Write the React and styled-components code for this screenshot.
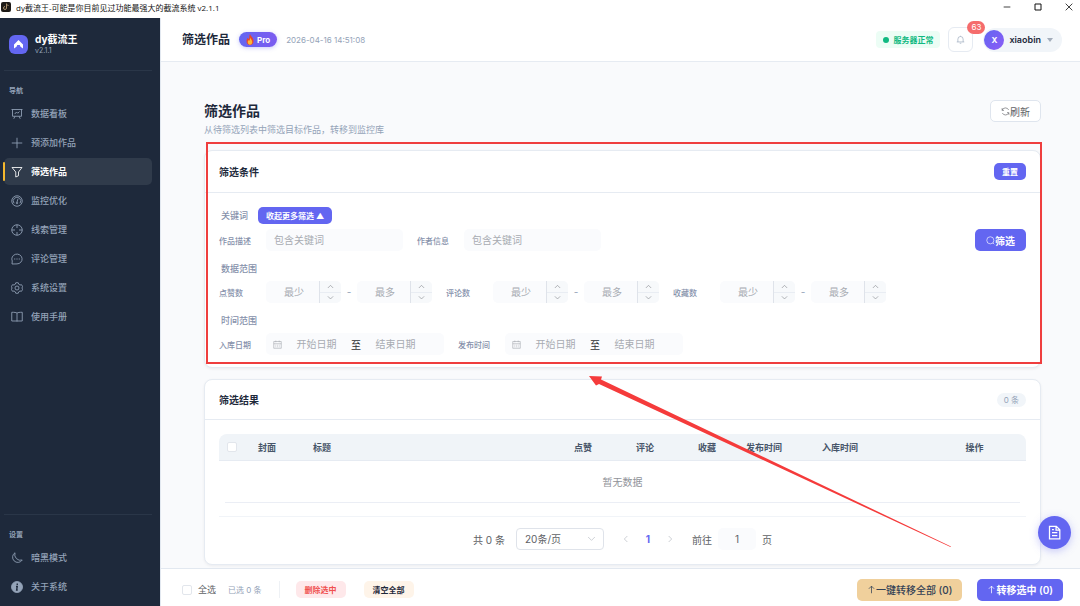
import { useState } from "react";
import styled, { createGlobalStyle, ThemeProvider } from "styled-components";

const theme = {
  colors: {
    primary: "#6366f1",
    dark: "#1e293b",
    text: "#606266",
    muted: "#94a3b8",
    label: "#8590aa",
    placeholder: "#a8abb2",
    border: "#e6ebf2",
    field: "#fafbfd",
    page: "#f9fafc",
    navText: "#94a3b8",
  },
};

const GlobalStyle = createGlobalStyle`
  * {
    box-sizing: border-box;
  }

  body {
    margin: 0;
    font-family: Inter, "Noto Sans CJK SC", sans-serif;
    font-size: 10px;
    color: #1e293b;
  }

  button, input, select {
    margin: 0;
    padding: 0;
    border: 0;
    background: none;
    font-family: inherit;
    color: inherit;
  }

  button {
    cursor: pointer;
  }

  h1, h2, p {
    margin: 0;
  }
`;

const Shell = styled.div`
  display: flex;
  flex-direction: column;
  height: 100vh;
  background-color: white;
`;

const TitleBar = styled.div`
  flex: none;
  display: flex;
  align-items: center;
  height: 18px;
  padding: 0 7px 4px 1px;
  font-family: "Open Sans", "Noto Sans CJK SC", sans-serif;
  font-size: 8px;
  color: #111;
`;

const AppTitle = styled.span`
  flex: 1;
  margin-left: 5px;
`;

const WindowButtons = styled.div`
  display: flex;
  gap: 23px;

  button {
    display: flex;
  }
`;

const Body = styled.div`
  flex: 1;
  display: flex;
  min-height: 0;
`;

const Sidebar = styled.aside`
  flex: none;
  display: flex;
  flex-direction: column;
  width: 160px;
  padding: 0 8px 6px 4px;
  background-color: ${({ theme }) => theme.colors.dark};
  color: ${({ theme }) => theme.colors.navText};
`;

const Brand = styled.div`
  display: flex;
  align-items: center;
  gap: 7px;
  height: 53px;
  padding-left: 5px;
  border-bottom: 1px solid #2a3648;
`;

const BrandLogo = styled.div`
  display: flex;
  align-items: center;
  justify-content: center;
  width: 19px;
  height: 19px;
  border-radius: 6px;
  background-color: ${({ theme }) => theme.colors.primary};
`;

const BrandName = styled.p`
  font-size: 10px;
  line-height: 14px;
  font-weight: 700;
  color: white;
`;

const BrandVersion = styled.p`
  font-size: 7px;
  line-height: 10px;
`;

const NavTitle = styled.p`
  padding: 15px 5px 4px;
  font-size: 7px;
  line-height: 10px;
  font-weight: 600;
`;

const Nav = styled.nav`
  display: flex;
  flex-direction: column;
  gap: 2px;
`;

const NavBottom = styled.div`
  margin-top: auto;
  border-top: 1px solid #2a3648;
`;

const NavLink = styled.a`
  display: flex;
  align-items: center;
  gap: 8px;
  height: 27px;
  padding-left: 7px;
  border-radius: 5px;
  font-size: 9px;
  font-weight: ${({ $active }) => ($active ? 700 : 500)};
  color: ${({ $active }) => ($active ? "white" : "inherit")};
  background-color: ${({ $active }) => ($active ? "#303b4b" : "transparent")};
  text-decoration: none;
  position: relative;

  &::before {
    content: "";
    display: ${({ $active }) => ($active ? "block" : "none")};
    position: absolute;
    left: -1px;
    top: 4px;
    bottom: 4px;
    width: 2px;
    border-radius: 1px;
    background-color: #f5b82e;
  }
`;

const Main = styled.main`
  flex: 1;
  display: flex;
  flex-direction: column;
  min-width: 0;
  border-left: 1px solid #e2e8f0;
`;

const Header = styled.header`
  flex: none;
  display: flex;
  align-items: center;
  height: 44px;
  padding: 0 18px 0 21px;
  border-bottom: 1px solid ${({ theme }) => theme.colors.border};
`;

const HeaderTitle = styled.h1`
  font-size: 12px;
  line-height: 18px;
  font-weight: 700;
`;

const ProTag = styled.span`
  display: flex;
  align-items: center;
  gap: 3px;
  height: 15px;
  margin: 0 9px;
  padding: 0 7px;
  border-radius: 8px;
  background: linear-gradient(90deg, #6366f1, #7c5cf0);
  box-shadow: 0 1px 4px rgba(99, 102, 241, 0.35);
  font-size: 8px;
  font-weight: 700;
  color: white;
`;

const Clock = styled.time`
  font-size: 8px;
  color: ${({ theme }) => theme.colors.muted};
`;

const HeaderRight = styled.div`
  display: flex;
  align-items: center;
  margin-left: auto;
`;

const ServerStatus = styled.span`
  display: flex;
  align-items: center;
  gap: 4px;
  height: 17px;
  padding: 0 7px;
  border-radius: 4px;
  background-color: #ecfdf5;
  font-size: 8px;
  font-weight: 600;
  color: #10b981;

  &::before {
    content: "";
    width: 6px;
    height: 6px;
    border-radius: 50%;
    background-color: #10b981;
  }
`;

const BellButton = styled.button`
  position: relative;
  display: flex;
  align-items: center;
  justify-content: center;
  width: 25px;
  height: 25px;
  margin: 0 10px 0 8px;
  border: 1px solid ${({ theme }) => theme.colors.border};
  border-radius: 6px;
  color: ${({ theme }) => theme.colors.muted};
`;

const BellCount = styled.span`
  position: absolute;
  top: -7px;
  right: -13px;
  height: 13px;
  padding: 0 4px;
  border-radius: 7px;
  background-color: #f56c6c;
  font-size: 8px;
  line-height: 13px;
  color: white;
`;

const UserButton = styled.button`
  display: flex;
  align-items: center;
  height: 24px;
  padding: 0 9px 0 1px;
  border-radius: 12px;
  background-color: #f1f5f9;
  font-size: 9px;
  font-weight: 600;
  color: ${({ theme }) => theme.colors.dark};

  svg {
    margin-left: 6px;
  }
`;

const Avatar = styled.span`
  width: 20px;
  height: 20px;
  margin-right: 5px;
  border-radius: 50%;
  background: linear-gradient(135deg, #6366f1, #8b5cf6);
  font-size: 8px;
  line-height: 20px;
  font-weight: 700;
  color: white;
`;

const Content = styled.div`
  flex: 1;
  min-height: 0;
  overflow: auto;
  padding: 38px 39px 2px 43px;
  background-color: ${({ theme }) => theme.colors.page};
`;

const PageHead = styled.div`
  display: flex;
  align-items: flex-start;
  justify-content: space-between;
  margin-bottom: 12px;
`;

const PageTitle = styled.h2`
  font-size: 14px;
  line-height: 22px;
  font-weight: 700;
`;

const PageDesc = styled.p`
  font-size: 9px;
  line-height: 16px;
  color: ${({ theme }) => theme.colors.muted};
`;

const buttonColors = {
  default: "background-color: white; color: #606266; border: 1px solid #dfe5ee;",
  primary: "background-color: #6366f1; color: white; font-weight: 600;",
  warning: "background-color: #f0d09c; color: #334155; font-weight: 500;",
};

const Button = styled.button`
  display: flex;
  align-items: center;
  justify-content: center;
  height: 22px;
  padding: 0 ${({ $compact }) => ($compact ? "10px" : "11px")};
  border-radius: 5px;
  font-size: 10px;
  white-space: nowrap;
  ${({ $variant = "default" }) => buttonColors[$variant]}
`;

const smallColors = {
  primary: "background-color: #6366f1; color: white;",
  danger: "background-color: #fee8ea; color: #f04f4f;",
  warning: "background-color: #fef4e9; color: #1e293b;",
};

const SmallButton = styled.button`
  height: 17px;
  padding: 0 ${({ $wide }) => ($wide ? "9px" : "8px")};
  border-radius: 5px;
  font-size: 8px;
  font-weight: 600;
  ${({ $variant = "primary" }) => smallColors[$variant]}
`;

const Card = styled.section`
  position: relative;
  margin-bottom: ${({ $last }) => ($last ? "0" : "11px")};
  border: 1px solid ${({ theme }) => theme.colors.border};
  border-radius: 8px;
  background-color: white;
  box-shadow: 0 1px 3px rgba(15, 23, 42, 0.06);
`;

const CardHead = styled.div`
  display: flex;
  align-items: center;
  justify-content: space-between;
  height: ${({ $tall }) => ($tall ? "42px" : "40px")};
  padding: 0 14px;
  border-bottom: 1px solid ${({ theme }) => theme.colors.border};
`;

const CardTitle = styled.h2`
  font-size: 10px;
  font-weight: 700;
`;

const CountTag = styled.span`
  padding: 0 7px;
  border-radius: 7px;
  background-color: #f1f5f9;
  font-size: 8px;
  line-height: 14px;
  color: ${({ theme }) => theme.colors.muted};
`;

const Highlight = styled.div`
  position: absolute;
  inset: -9px -2px 3px 1px;
  border: 2px solid #ef3e3e;
  pointer-events: none;
`;

const Arrow = styled.svg`
  position: absolute;
  top: -5px;
  left: 384px;
  width: 366px;
  height: 174px;
  pointer-events: none;
`;

const FilterForm = styled.form`
  display: flex;
  flex-direction: column;
  gap: 6px;
  padding: 14px 14px 12px;
`;

const KeywordRow = styled.div`
  display: flex;
  align-items: center;
  gap: 10px;
  height: 16px;
  padding-left: 2px;
  font-size: 9px;
  font-weight: 500;
  color: ${({ theme }) => theme.colors.label};
`;

const GroupLabel = styled.p`
  padding: 5px 0 0 2px;
  font-size: 9px;
  line-height: 13px;
  font-weight: 500;
  color: ${({ theme }) => theme.colors.label};
`;

const FilterRow = styled.div`
  display: flex;
  align-items: center;
  gap: 14px;

  > button {
    margin-left: auto;
  }
`;

const Field = styled.div`
  display: flex;
  align-items: center;
`;

const FieldLabel = styled.label`
  width: 47px;
  font-size: 8px;
  font-weight: 500;
  color: ${({ theme }) => theme.colors.label};
`;

const TextInput = styled.input`
  width: ${({ $width }) => $width};
  min-width: 0;
  height: 22px;
  padding: 0 8px;
  border-radius: 5px;
  background-color: ${({ theme }) => theme.colors.field};
  font-size: 10px;
  text-align: ${({ $center }) => ($center ? "center" : "left")};
  color: ${({ theme }) => theme.colors.text};
  outline: none;

  &::placeholder {
    color: ${({ theme }) => theme.colors.placeholder};
  }
`;

const NumberBox = styled.div`
  display: flex;
  width: 75px;
  height: 22px;
  border-radius: 5px;
  overflow: hidden;
  background-color: ${({ theme }) => theme.colors.field};

  input {
    padding: 0 5px 0 8px;
  }
`;

const Stepper = styled.div`
  flex: none;
  display: flex;
  flex-direction: column;
  width: 22px;
  border-left: 1px solid #dfe3ea;
  background-color: #f7f9fb;

  button {
    flex: 1;
    display: flex;
    align-items: center;
    justify-content: center;
    color: #909399;
  }

  button + button {
    border-top: 1px solid #e9edf3;
  }
`;

const Dash = styled.span`
  width: 16px;
  font-size: 10px;
  text-align: center;
  color: ${({ theme }) => theme.colors.muted};
`;

const DateBox = styled.div`
  display: flex;
  align-items: center;
  width: 178px;
  height: 22px;
  padding: 0 14px 0 7px;
  border-radius: 5px;
  background-color: ${({ theme }) => theme.colors.field};
  font-size: 10px;
  color: #303133;

  svg {
    flex: none;
    color: #a8abb2;
  }

  input {
    flex: 1;
    padding: 0;
    background: none;
  }
`;

const TableWrap = styled.div`
  padding: 14px;
`;

const Table = styled.table`
  width: 100%;
  table-layout: fixed;
  border-collapse: separate;
  border-spacing: 0;

  th {
    height: 27px;
    padding: 0 8px;
    border-bottom: 1px solid #e6ebf2;
    background-color: #f0f4f8;
    font-size: 9px;
    font-weight: 600;
    color: #475569;
  }

  th:first-child {
    border-radius: 8px 0 0 0;
  }

  th:last-child {
    border-radius: 0 8px 0 0;
  }

  td {
    padding: 0 6px;
  }
`;

const HeadCell = styled.th`
  width: ${({ $width }) => $width};
  text-align: ${({ $align = "left" }) => $align};
`;

const EmptyText = styled.div`
  height: 42px;
  border-bottom: 1px solid #ebeef5;
  font-size: 10px;
  line-height: 42px;
  text-align: center;
  color: #909399;
`;

const Checkbox = styled.input`
  appearance: none;
  display: block;
  width: 10px;
  height: 10px;
  border: 1px solid #e2e6ec;
  border-radius: 2px;
  background-color: white;

  &:checked {
    border-color: ${({ theme }) => theme.colors.primary};
    background-color: ${({ theme }) => theme.colors.primary};
  }
`;

const Pagination = styled.div`
  display: flex;
  align-items: center;
  justify-content: center;
  margin-top: 13px;
  padding-top: 11px;
  border-top: 1px solid #f1f4f8;
  font-size: 10px;
  color: ${({ theme }) => theme.colors.text};
`;

const PageSize = styled.div`
  position: relative;
  margin: 0 11px;

  select {
    appearance: none;
    display: block;
    width: 88px;
    height: 22px;
    padding: 0 8px;
    border: 1px solid #dfe3ea;
    border-radius: 4px;
    background-color: white;
    font-size: 10px;
  }

  svg {
    position: absolute;
    right: 8px;
    top: 6px;
    color: #b4b8c0;
    pointer-events: none;
  }
`;

const PageButton = styled.button`
  display: flex;
  align-items: center;
  justify-content: center;
  width: 22px;
  height: 22px;
  font-size: 10px;
  font-weight: 700;
  color: ${({ $active, theme }) => ($active ? theme.colors.primary : "#b4b8c0")};
`;

const Jumper = styled.label`
  display: flex;
  align-items: center;
  gap: 6px;
  margin-left: 11px;
`;

const Footer = styled.footer`
  flex: none;
  display: flex;
  align-items: center;
  height: 38px;
  padding: 4px 17px 0 21px;
  border-top: 1px solid #e2e8f0;
  background-color: white;
`;

const CheckAll = styled.label`
  display: flex;
  align-items: center;
  gap: 6px;
  font-size: 9px;
  color: ${({ theme }) => theme.colors.text};
`;

const Selected = styled.span`
  margin: 0 17px 0 12px;
  font-size: 8px;
  color: ${({ theme }) => theme.colors.muted};
`;

const FooterGroup = styled.div`
  display: flex;
  gap: 18px;
  padding-left: 16px;
  border-left: 1px solid #eef1f5;
`;

const FooterActions = styled.div`
  display: flex;
  gap: 15px;
  margin-left: auto;
`;

const FloatButton = styled.button`
  position: fixed;
  right: 9px;
  bottom: 57px;
  display: flex;
  align-items: center;
  justify-content: center;
  width: 33px;
  height: 33px;
  border-radius: 50%;
  background-color: ${({ theme }) => theme.colors.primary};
  box-shadow: 0 2px 8px rgba(99, 102, 241, 0.35);
  color: white;
`;

const iconPaths = {
  board: (
    <>
      <path d="M1 3h22M3 3v13.500h18V3M8 16.500l-2.500 5M16 16.500l2.500 5" />
      <path d="M7.500 12l3.500-4 2.500 2.500L17 7" />
    </>
  ),
  plus: <path d="M12 1.500v21M1.500 12h21" />,
  filter: <path d="M2 3h20l-7 9v7.500L9.500 22V12z" />,
  gauge: (
    <>
      <circle cx="12" cy="12" r="10.500" />
      <path d="M6 16.500a7.500 7.500 0 1 1 12 0M14 7.500L12 14" />
      <circle cx="12" cy="16" r="1.500" />
    </>
  ),
  aim: (
    <>
      <circle cx="12" cy="12" r="10.500" />
      <path d="M12 1.500v6.500M12 16v6.500M1.500 12H8M16 12h6.500" />
    </>
  ),
  chat: (
    <>
      <path d="M2 22l.5-6A10.300 9.800 0 1 1 12 21.800z" />
      <path d="M6.500 12h2M11 12h2M15.500 12h2" strokeWidth="2.400" />
    </>
  ),
  gear: (
    <>
      <path d="M9.500 1.500h5l1 3 2.500 1.500 3-.6 2.500 4.200-2 2.400 2 2.400-2.500 4.200-3-.6-2.500 1.500-1 3h-5l-1-3L6 18l-3 .6L.5 14.400l2-2.400-2-2.400L3 5.400l3 .6 2.500-1.500z" />
      <circle cx="12" cy="12" r="4" />
    </>
  ),
  book: <path d="M12 4v17M12 4c-2-1-5-1.500-10.500-1.500V20H12h10.500V2.500C17 2.500 14 3 12 4z" />,
  moon: <path d="M8 1.500A10.500 10.500 0 1 0 22.500 16 11.500 11.500 0 0 1 8 1.500z" />,
  info: (
    <>
      <circle cx="12" cy="12" r="11" fill="currentColor" />
      <path d="M12.500 5v3M10 11h2.500l-1.200 7h2.200" stroke="#1e293b" strokeWidth="2.800" />
    </>
  ),
  bell: <path d="M5 18.500V11a7 7 0 0 1 14 0v7.500M2 18.500h20M12 4V2M10 22h4" />,
  refresh: <path d="M3 8.500A9.500 9.500 0 0 1 20.500 8M20.500 16A9.500 9.500 0 0 1 3.500 16M3 3v6h5M21 21v-6h-5" />,
  search: (
    <>
      <circle cx="11.500" cy="11.500" r="9.500" />
      <path d="M18.500 18.500l3.500 3.500" />
    </>
  ),
  up: <path d="M12 22V3M5 10l7-7 7 7" />,
  calendar: <path d="M2 4h20v18H2zM2 10h20M7.500 1.500V6M16.500 1.500V6M6.500 14h2M11 14h2M15.500 14h2M6.500 18h2M11 18h2M15.500 18h2" />,
  chevronUp: <path d="M3 17l9-9 9 9" />,
  chevronDown: <path d="M3 8l9 9 9-9" />,
  chevronLeft: <path d="M16 3l-9 9 9 9" />,
  chevronRight: <path d="M8 3l9 9-9 9" />,
  document: <path d="M4 2h11l5.500 5.500V22H4zM14.500 2v6h6M8 12h8.500M8 17h8.500M8 7.500h3" />,
  minimize: <path d="M2 12h20" />,
  maximize: <path d="M3 3h18v18H3z" />,
  close: <path d="M2 2l20 20M22 2L2 22" />,
};

const Icon = ({ name, size = 12, stroke = 1.7 }) => (
  <svg
    width={size}
    height={size}
    viewBox="0 0 24 24"
    fill="none"
    stroke="currentColor"
    strokeWidth={stroke}
    aria-hidden="true"
  >
    {iconPaths[name]}
  </svg>
);

const navItems = [
  { icon: "board", label: "数据看板" },
  { icon: "plus", label: "预添加作品" },
  { icon: "filter", label: "筛选作品" },
  { icon: "gauge", label: "监控优化" },
  { icon: "aim", label: "线索管理" },
  { icon: "chat", label: "评论管理" },
  { icon: "gear", label: "系统设置" },
  { icon: "book", label: "使用手册" },
];

const settingItems = [
  { icon: "moon", label: "暗黑模式" },
  { icon: "info", label: "关于系统" },
];

const columns = [
  { label: "封面", width: "55px" },
  { label: "标题" },
  { label: "点赞", width: "62px", align: "center" },
  { label: "评论", width: "62px", align: "center" },
  { label: "收藏", width: "62px", align: "center" },
  { label: "发布时间", width: "76px" },
  { label: "入库时间", width: "109px" },
  { label: "操作", width: "103px", align: "center" },
];

const NumberInput = ({ id, placeholder, label }) => {
  const [value, setValue] = useState("");

  const handleStep = (step) => {
    setValue((prev) => String(Math.max(0, Number(prev) + step)));
  };

  return (
    <NumberBox>
      <TextInput
        id={id}
        $width="53px"
        $center
        placeholder={placeholder}
        aria-label={label}
        value={value}
        onChange={(e) => setValue(e.target.value)}
      />
      <Stepper>
        <button type="button" aria-label="增加" onClick={() => handleStep(1)}>
          <Icon name="chevronUp" size={7} stroke={2.4} />
        </button>
        <button type="button" aria-label="减少" onClick={() => handleStep(-1)}>
          <Icon name="chevronDown" size={7} stroke={2.4} />
        </button>
      </Stepper>
    </NumberBox>
  );
};

const RangeField = ({ id, label }) => (
  <Field>
    <FieldLabel htmlFor={id}>{label}</FieldLabel>
    <NumberInput id={id} placeholder="最少" />
    <Dash>-</Dash>
    <NumberInput placeholder="最多" label={`${label}最多`} />
  </Field>
);

const DateField = ({ id, label }) => (
  <Field>
    <FieldLabel htmlFor={id}>{label}</FieldLabel>
    <DateBox>
      <Icon name="calendar" size={9} />
      <TextInput id={id} $center placeholder="开始日期" />
      <span>至</span>
      <TextInput $center placeholder="结束日期" aria-label={`${label}结束`} />
    </DateBox>
  </Field>
);

const TextField = ({ id, label }) => (
  <Field>
    <FieldLabel htmlFor={id}>{label}</FieldLabel>
    <TextInput id={id} $width="137px" placeholder="包含关键词" />
  </Field>
);

const SideNav = () => (
  <Sidebar>
    <Brand>
      <BrandLogo>
        <svg width="11" height="11" viewBox="0 0 22 22">
          <path d="M2 11L11 2l9 9v8l-5-3.500-1.500-3.500h-5L7 15.500 2 19z" fill="white" />
        </svg>
      </BrandLogo>
      <div>
        <BrandName>dy截流王</BrandName>
        <BrandVersion>v2.1.1</BrandVersion>
      </div>
    </Brand>
    <NavTitle>导航</NavTitle>
    <Nav>
      {navItems.map(({ icon, label }) => (
        <NavLink key={label} href="#" $active={label === "筛选作品"}>
          <Icon name={icon} />
          {label}
        </NavLink>
      ))}
    </Nav>
    <NavBottom>
      <NavTitle>设置</NavTitle>
      <Nav>
        {settingItems.map(({ icon, label }) => (
          <NavLink key={label} href="#">
            <Icon name={icon} />
            {label}
          </NavLink>
        ))}
      </Nav>
    </NavBottom>
  </Sidebar>
);

const TopHeader = () => (
  <Header>
    <HeaderTitle>筛选作品</HeaderTitle>
    <ProTag>
      <svg width="8" height="11" viewBox="0 0 16 22">
        <path d="M8 0c1 4 7 7 7 14 0 5-3 8-7 8s-7-3-7-8c0-3 1.500-5 3-6.500C4.500 9 5 10 6 10c1-3 0-7 2-10z" fill="#e8452c" />
        <path d="M8.500 7c.5 3 4 5 4 9 0 3.500-2 5.500-4.500 5.500S3.500 19.500 3.500 16.500c0-2 1-3.500 2-4.500.5 1 1 1.500 1.500 1.500C8 11.500 8 9.500 8.500 7z" fill="#fbb634" />
      </svg>
      Pro
    </ProTag>
    <Clock>2026-04-16 14:51:08</Clock>
    <HeaderRight>
      <ServerStatus>服务器正常</ServerStatus>
      <BellButton type="button" aria-label="通知">
        <Icon name="bell" size={9} />
        <BellCount>63</BellCount>
      </BellButton>
      <UserButton type="button">
        <Avatar>X</Avatar>
        xiaobin
        <svg width="6" height="4" viewBox="0 0 6 4">
          <path d="M0 0h6L3 4z" fill="#a3adbb" />
        </svg>
      </UserButton>
    </HeaderRight>
  </Header>
);

const FilterCard = () => (
  <Card>
    <CardHead $tall>
      <CardTitle>筛选条件</CardTitle>
      <SmallButton type="reset" form="filters">
        重置
      </SmallButton>
    </CardHead>
    <FilterForm id="filters" onSubmit={(e) => e.preventDefault()}>
      <KeywordRow>
        关键词
        <SmallButton type="button">收起更多筛选 ▲</SmallButton>
      </KeywordRow>
      <FilterRow>
        <TextField id="desc" label="作品描述" />
        <TextField id="author" label="作者信息" />
        <Button $variant="primary" type="submit">
          <Icon name="search" size={9} />
          筛选
        </Button>
      </FilterRow>
      <GroupLabel>数据范围</GroupLabel>
      <FilterRow>
        <RangeField id="likes" label="点赞数" />
        <RangeField id="comments" label="评论数" />
        <RangeField id="favorites" label="收藏数" />
      </FilterRow>
      <GroupLabel>时间范围</GroupLabel>
      <FilterRow>
        <DateField id="stored" label="入库日期" />
        <DateField id="published" label="发布时间" />
      </FilterRow>
    </FilterForm>
    <Highlight />
  </Card>
);

const ResultCard = () => (
  <Card $last>
    <CardHead>
      <CardTitle>筛选结果</CardTitle>
      <CountTag>0 条</CountTag>
    </CardHead>
    <TableWrap>
      <Table>
        <thead>
          <tr>
            <HeadCell $width="31px">
              <Checkbox type="checkbox" aria-label="选择全部行" />
            </HeadCell>
            {columns.map(({ label, width, align }) => (
              <HeadCell key={label} $width={width} $align={align}>
                {label}
              </HeadCell>
            ))}
          </tr>
        </thead>
        <tbody>
          <tr>
            <td colSpan={columns.length + 1}>
              <EmptyText>暂无数据</EmptyText>
            </td>
          </tr>
        </tbody>
      </Table>
      <Pagination>
        共 0 条
        <PageSize>
          <select aria-label="每页条数">
            <option>20条/页</option>
            <option>50条/页</option>
          </select>
          <Icon name="chevronDown" size={9} />
        </PageSize>
        <PageButton type="button" aria-label="上一页">
          <Icon name="chevronLeft" size={8} stroke={2} />
        </PageButton>
        <PageButton type="button" $active>
          1
        </PageButton>
        <PageButton type="button" aria-label="下一页">
          <Icon name="chevronRight" size={8} stroke={2} />
        </PageButton>
        <Jumper>
          前往
          <TextInput $width="38px" $center defaultValue="1" />
          页
        </Jumper>
      </Pagination>
    </TableWrap>
    <Arrow viewBox="0 0 366 174">
      <path d="M0 1L13 1.500 12 4.500 362 171.500 361.500 172 10 9 7 10.500z" fill="#f53b3b" />
    </Arrow>
  </Card>
);

const App = () => (
  <ThemeProvider theme={theme}>
    <GlobalStyle />
    <Shell>
      <TitleBar>
        <svg width="10" height="10" viewBox="0 0 20 20">
          <rect width="20" height="20" rx="4" fill="#1d1a17" />
          <path d="M11 3v9a3 3 0 1 1-3-3M11 4c1 2 2 3 4 3" fill="none" stroke="#a98f6c" strokeWidth="2" />
        </svg>
        <AppTitle>dy截流王-可能是你目前见过功能最强大的截流系统 v2.1.1</AppTitle>
        <WindowButtons>
          <button type="button" aria-label="最小化">
            <Icon name="minimize" size={8} stroke={2.4} />
          </button>
          <button type="button" aria-label="最大化">
            <Icon name="maximize" size={8} stroke={3} />
          </button>
          <button type="button" aria-label="关闭">
            <Icon name="close" size={8} stroke={2.4} />
          </button>
        </WindowButtons>
      </TitleBar>
      <Body>
        <SideNav />
        <Main>
          <TopHeader />
          <Content>
            <PageHead>
              <div>
                <PageTitle>筛选作品</PageTitle>
                <PageDesc>从待筛选列表中筛选目标作品，转移到监控库</PageDesc>
              </div>
              <Button type="button" $compact>
                <Icon name="refresh" size={9} />
                刷新
              </Button>
            </PageHead>
            <FilterCard />
            <ResultCard />
          </Content>
          <Footer>
            <CheckAll>
              <Checkbox type="checkbox" />
              全选
            </CheckAll>
            <Selected>已选 0 条</Selected>
            <FooterGroup>
              <SmallButton type="button" $variant="danger" $wide>
                删除选中
              </SmallButton>
              <SmallButton type="button" $variant="warning" $wide>
                清空全部
              </SmallButton>
            </FooterGroup>
            <FooterActions>
              <Button type="button" $variant="warning" $compact>
                <Icon name="up" size={9} stroke={2} />
                一键转移全部 (0)
              </Button>
              <Button type="button" $variant="primary" $compact>
                <Icon name="up" size={9} stroke={2} />
                转移选中 (0)
              </Button>
            </FooterActions>
          </Footer>
        </Main>
      </Body>
      <FloatButton type="button" aria-label="日志">
        <Icon name="document" size={15} stroke={2} />
      </FloatButton>
    </Shell>
  </ThemeProvider>
);

export default App;
